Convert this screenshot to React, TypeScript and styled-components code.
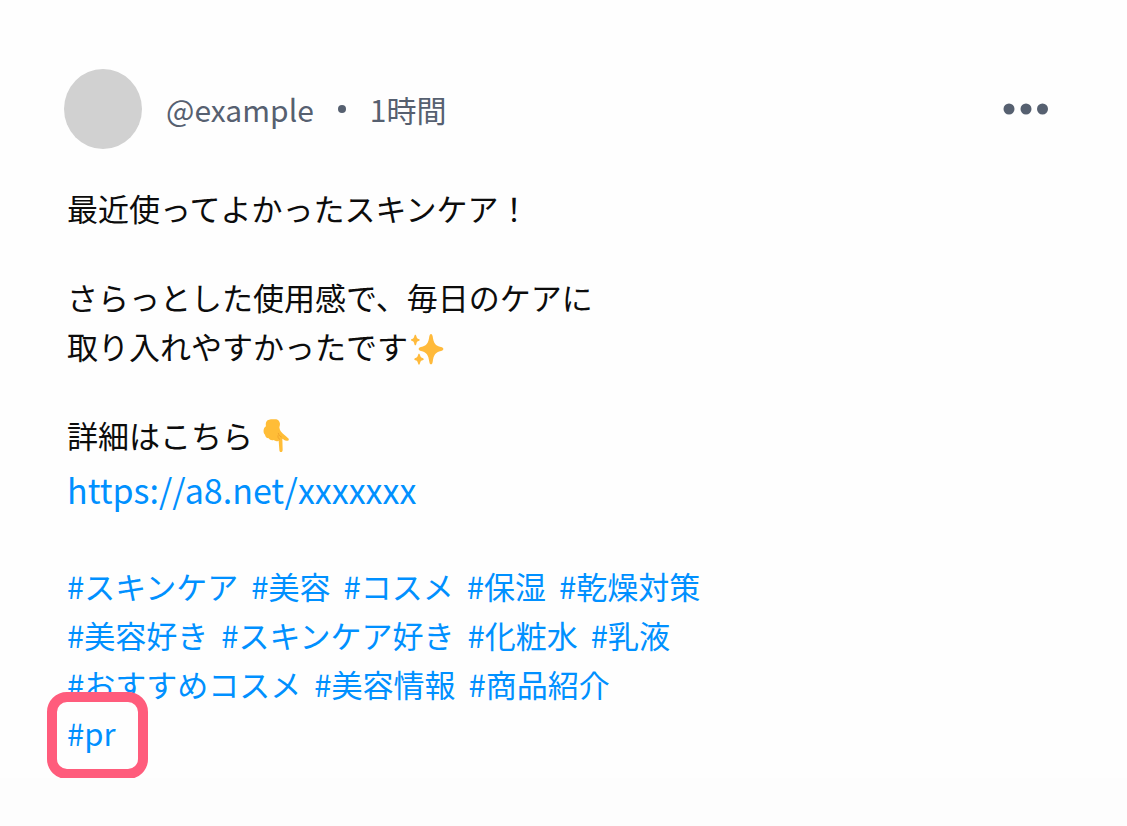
import React from "react";
import styled, { createGlobalStyle } from "styled-components";

const GlobalStyle = createGlobalStyle`
  * { box-sizing: border-box; }
  body {
    margin: 0;
    background: #fdfdfd;
    color: #0c0c0c;
    font-family: "Noto Sans CJK JP", sans-serif;
    font-size: 31px;
    line-height: 49px;
  }
`;

const Post = styled.article`
  padding: 69px 64px 0;
  background: #fefefe;
  overflow: hidden;
`;

const Header = styled.header`
  display: flex;
  align-items: center;
  color: #566070;
`;

const Avatar = styled.div`
  flex: none;
  width: 78px;
  height: 80px;
  margin-right: 24px;
  border-radius: 50%;
  background: #d1d1d1;
`;

const Meta = styled.div`
  display: flex;
  align-items: center;
  gap: 24px;
  font-size: 30px;
`;

const Separator = styled.span`
  width: 8px;
  height: 8px;
  border-radius: 50%;
  background: currentColor;
`;

const MenuButton = styled.button`
  display: flex;
  margin: 0 14px 0 auto;
  padding: 0;
  border: 0;
  background: none;
  color: inherit;
  cursor: pointer;
`;

const Body = styled.div`
  display: flex;
  flex-direction: column;
  gap: 40px;
  padding: 34px 3px 0;
`;

const Paragraph = styled.p`
  margin: 0;
`;

const Emoji = styled.svg`
  display: inline-block;
  margin-left: 2px;
  vertical-align: -6px;
`;

const Link = styled.a`
  color: #0090ff;
  text-decoration: none;
`;

const Url = styled(Link)`
  display: block;
  font-size: 34px;
  line-height: 62px;
`;

const TagRow = styled.div`
  display: flex;
  flex-wrap: wrap;
  column-gap: 13px;
`;

const MarkedRow = styled(TagRow)`
  padding-bottom: 21px;
`;

const Marked = styled.div`
  position: relative;
`;

const Highlight = styled.div`
  position: absolute;
  inset: -16px -33px -22px -20px;
  border: 10px solid #ff5c7c;
  border-radius: 20px;
  pointer-events: none;
`;

const Footer = styled.div`
  height: 48px;
  background: #fdfdfd;
`;

const rows = [
  ["#スキンケア", "#美容", "#コスメ", "#保湿", "#乾燥対策"],
  ["#美容好き", "#スキンケア好き", "#化粧水", "#乳液"],
  ["#おすすめコスメ", "#美容情報", "#商品紹介"],
];

function Sparkles() {
  return (
    <Emoji width="34" height="32" viewBox="30 36 102 96" fill="#ffba3b" role="img" aria-label="キラキラ">
      <path d="M93 39c3 0 4 3 5 7 3 22 8 28 25 32 4 1 7 3 7 6s-3 5-7 6c-17 4-22 11-25 33-1 4-2 7-5 7s-4-3-5-7c-3-22-8-29-25-33-4-1-7-3-7-6s3-5 7-6c17-4 22-10 25-32 1-4 2-7 5-7Z" />
      <path d="M46 41c2 0 2 2 3 4 1 6 3 8 7 9 2 1 3 1 3 3s-1 2-3 3c-4 1-6 3-7 9-1 2-1 4-3 4s-2-2-3-4c-1-6-3-8-7-9-2-1-3-1-3-3s1-2 3-3c4-1 6-3 7-9 1-2 1-4 3-4Z" />
      <path d="M57 98c2 0 2 2 3 4 1 6 4 8 8 9 2 1 3 2 3 4s-1 2-3 3c-4 1-7 3-8 9-1 2-1 4-3 4s-2-2-3-4c-1-6-4-8-8-9-2-1-3-1-3-3s1-3 3-4c4-1 7-3 8-9 1-2 1-4 3-4Z" />
    </Emoji>
  );
}

function PointDown() {
  return (
    <Emoji width="29" height="36" viewBox="36 27 87 108" role="img" aria-label="下を指す手">
      <path
        fill="#ffbd37"
        d="M49 38c4-6 11-7 20-7 9-1 16 0 19 7 3 5 2 10 0 17 1 9 5 14 11 19 6 5 12 10 17 15 2 4-2 8-7 6-5-1-8-4-12-6l1 33c0 5-2 7-5 7s-5-2-5-7l-2-27c-6 3-11 1-15-2-6 2-12 0-15-5-7-1-10-5-11-11-4-4-5-10-4-15 1-5 4-8 7-10-1-5-1-10 1-14Z"
      />
      <path
        fill="none"
        stroke="#e99725"
        strokeWidth="2"
        strokeLinecap="round"
        d="M85 73c1 5 4 8 9 11M84 80c-1 5 1 9 5 11"
      />
    </Emoji>
  );
}

export default function App() {
  return (
    <main lang="ja">
      <GlobalStyle />
      <Post>
        <Header>
          <Avatar />
          <Meta>
            <span>@example</span>
            <Separator />
            <time>1時間</time>
          </Meta>
          <MenuButton type="button" aria-label="メニュー">
            <svg width="46" height="12" viewBox="0 0 46 12" fill="currentColor">
              <circle cx="6" cy="6" r="5.5" />
              <circle cx="23" cy="6" r="5.5" />
              <circle cx="39.5" cy="6" r="5.5" />
            </svg>
          </MenuButton>
        </Header>
        <Body>
          <Paragraph>最近使ってよかったスキンケア！</Paragraph>
          <Paragraph>
            さらっとした使用感で、毎日のケアに
            <br />
            取り入れやすかったです
            <Sparkles />
          </Paragraph>
          <div>
            <Paragraph>
              詳細はこちら <PointDown />
            </Paragraph>
            <Url href="#link">https://a8.net/xxxxxxx</Url>
          </div>
          <div>
            {rows.map((tags) => (
              <TagRow key={tags[0]}>
                {tags.map((tag) => (
                  <Link key={tag} href={tag}>
                    {tag}
                  </Link>
                ))}
              </TagRow>
            ))}
            <MarkedRow>
              <Marked>
                <Link href="#pr">#pr</Link>
                <Highlight />
              </Marked>
            </MarkedRow>
          </div>
        </Body>
      </Post>
      <Footer />
    </main>
  );
}
